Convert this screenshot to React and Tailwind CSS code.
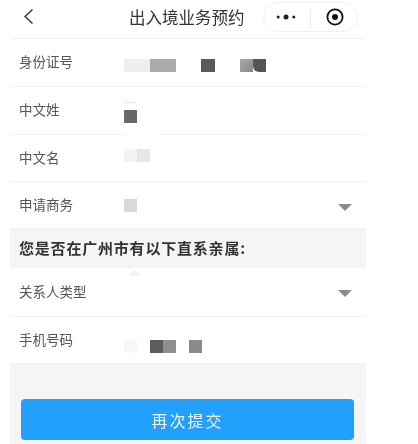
const font = { fontFamily: '"Noto Sans CJK SC", "Liberation Sans", sans-serif' }

function Arrow({top}) {
  return <div className={`ml-auto mr-[14px] h-0 w-0 border-x-[7.5px] border-t-[7px] border-x-transparent border-t-[#8c8c8c] ${top}`} />
}

function Row({label, children, arrowTop, height = 'h-[48px]'}) {
  return (
    <div className={`relative flex items-center border-b border-[#f0f0f0] bg-white pl-[9px] ${height}`}>
      <div className="mb-[2px] w-[105px] shrink-0 text-[13.5px] text-[#555]">{label}</div>
      {children}
      {arrowTop && <Arrow top={arrowTop} />}
    </div>
  )
}

export default function App() {
  return (
    <div className="h-[444px] w-[418px] overflow-hidden bg-white blur-[0.35px]" style={font}>
      <div className="ml-[10px] w-[356px]">
        <div className="flex h-[39px] items-start border-b border-[#efefef]">
          <svg className="ml-[13px] mt-[8px]" width="12" height="17" viewBox="0 0 12 17" fill="none">
            <path d="M9.5 1.5 L2 8.5 L9.5 15.5" stroke="#333" strokeWidth="1.4" />
          </svg>
          <div className="ml-[94px] mt-[5px] w-[116px] whitespace-nowrap text-[16.5px] leading-6 text-[#333]">出入境业务预约</div>
          <div className="ml-[18px] mt-[2px] flex h-[30px] w-[95px] items-center rounded-full border border-[#f2f2f2]">
            <svg className="ml-[12px]" width="20" height="6" viewBox="0 0 20 6">
              <circle cx="2.2" cy="3" r="1.5" fill="#222" />
              <circle cx="10" cy="3" r="2.5" fill="#222" />
              <circle cx="17.8" cy="3" r="1.5" fill="#222" />
            </svg>
            <div className="ml-[14px] h-[17px] w-px bg-[#e8e8e8]" />
            <svg className="ml-[15px]" width="18" height="18" viewBox="0 0 18 18" fill="none">
              <circle cx="9" cy="9" r="7.6" stroke="#111" strokeWidth="1.8" />
              <circle cx="9" cy="9" r="3" fill="#111" />
            </svg>
          </div>
        </div>

        <Row label="身份证号">
          <div className="mt-[6px] flex h-[13px]">
            <div className="w-[26px] bg-[#efefef]" />
            <div className="w-[26px] bg-[#ababab]" />
            <div className="ml-[25px] w-[14px] bg-[#5a5a5a]" />
            <div className="ml-[25px] w-[13px] bg-gradient-to-br from-[#a8a8a8] to-[#8a8a8a]" />
            <div className="w-[13px] rounded-bl-[6px] bg-[#555]" />
          </div>
        </Row>

        <Row label="中文姓">
          <div className="mt-[3px] flex flex-col">
            <div className="mx-[1px] mb-[6px] h-[2px] w-[11px] border-t border-dotted border-[#ccc]" />
            <div className="h-[13px] w-[13px] bg-[#686868]" />
          </div>
          <div className="absolute bottom-[-1px] left-[116px] h-px w-[34px] bg-white" />
        </Row>

        <Row label="中文名" height="h-[47px]">
          <div className="mb-[6px] flex h-[13px]">
            <div className="w-[13px] bg-[#f4f4f4]" />
            <div className="w-[13px] bg-[#e6e6e6]" />
          </div>
        </Row>

        <Row label="申请商务" arrowTop="mt-[5px]" height="h-[47px]">
          <div className="mt-[1px] h-[13px] w-[13px] bg-[#d9d9d9]" />
        </Row>

        <div className="flex h-[39px] items-center bg-[#f5f5f5] pl-[9px] text-[15px] font-bold tracking-[0.8px] text-[#333]">
          您是否在广州市有以下直系亲属:
        </div>

        <Row label="关系人类型" arrowTop="mt-[3px]" height="h-[49px]">
          <div className="absolute left-[120px] top-[3px] h-[5px] w-[10px] rounded-t-full bg-[#f2f2f2]" />
        </Row>

        <Row label="手机号码" height="h-[47px]">
          <div className="mt-[13px] flex h-[13px]">
            <div className="w-[13px] bg-[#f8f8f8]" />
            <div className="ml-[13px] w-[13px] bg-[#5c5c5c]" />
            <div className="w-[13px] bg-[#909090]" />
            <div className="ml-[13px] w-[13px] bg-[#8a8a8a]" />
          </div>
        </Row>

        <div className="h-[80px] bg-[#f5f5f5] pl-[11px] pt-[35px]">
          <div className="flex h-[41px] w-[333px] items-center justify-center rounded-[4px] bg-[#22a0fc] text-[16px] tracking-[2px] text-[#eef7ff]">
            再次提交
          </div>
        </div>
      </div>
    </div>
  )
}
